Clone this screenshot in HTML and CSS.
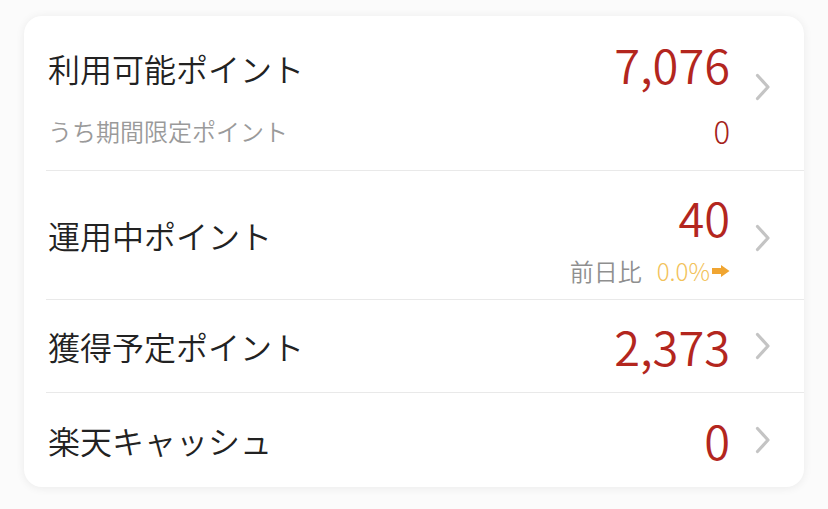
FILE: index.html
```html
<!DOCTYPE html>
<html lang="ja">
<head>
<meta charset="utf-8">
<link rel="stylesheet" href="styles.css">
</head>
<body>
<div class="card">
  <div class="row row-first">
    <div class="grid2">
      <div class="label label-first">利用可能ポイント</div>
      <div class="num">7,076</div>
      <div class="sublabel">うち期間限定ポイント</div>
      <div class="subnum">0</div>
    </div>
    <svg class="chev chev-first" viewBox="0 0 16 28" width="16" height="28"><polyline points="2.5,2.5 13,14 2.5,25.5" fill="none" stroke="#c4c4c4" stroke-width="3.2" stroke-linecap="round" stroke-linejoin="round"/></svg>
  </div>
  <div class="row row-second">
    <div class="label label-second">運用中ポイント</div>
    <div class="right">
      <div class="num">40</div>
      <div class="compare"><span class="cmp-label">前日比</span><span class="cmp-val">0.0%</span><svg class="arrow" viewBox="0 0 18 12" width="18" height="12"><path d="M0 3 H9 V0 L17.5 6 L9 12 V9 H0 Z" fill="#f0a531"/></svg></div>
    </div>
    <svg class="chev" viewBox="0 0 16 28" width="16" height="28"><polyline points="2.5,2.5 13,14 2.5,25.5" fill="none" stroke="#c4c4c4" stroke-width="3.2" stroke-linecap="round" stroke-linejoin="round"/></svg>
  </div>
  <div class="row row-single">
    <div class="label">獲得予定ポイント</div>
    <div class="num">2,373</div>
    <svg class="chev" viewBox="0 0 16 28" width="16" height="28"><polyline points="2.5,2.5 13,14 2.5,25.5" fill="none" stroke="#c4c4c4" stroke-width="3.2" stroke-linecap="round" stroke-linejoin="round"/></svg>
  </div>
  <div class="row row-single row-last">
    <div class="label">楽天キャッシュ</div>
    <div class="num">0</div>
    <svg class="chev" viewBox="0 0 16 28" width="16" height="28"><polyline points="2.5,2.5 13,14 2.5,25.5" fill="none" stroke="#c4c4c4" stroke-width="3.2" stroke-linecap="round" stroke-linejoin="round"/></svg>
  </div>
</div>
</body>
</html>
```
FILE: styles.css
```css
html, body {
  margin: 0;
  padding: 0;
}
body {
  background: #fbfbfb;
  width: 828px;
  height: 509px;
  overflow: hidden;
  font-family: "Noto Sans CJK JP", "Noto Sans", sans-serif;
  padding: 16px 24px 0 24px;
  box-sizing: border-box;
}
.card {
  background: #ffffff;
  border-radius: 18px;
  box-shadow: 0 1px 10px rgba(0, 0, 0, 0.07);
  width: 780px;
  height: 471px;
  box-sizing: border-box;
  overflow: hidden;
}
.row {
  display: flex;
  align-items: center;
  margin-left: 22px;
  padding-left: 2px;
  padding-right: 33px;
  border-bottom: 1px solid #e9e9e9;
  box-sizing: border-box;
}
.row-last {
  border-bottom: none;
}
.row-first {
  height: 155px;
  padding-top: 22px;
  padding-bottom: 23px;
}
.row-second {
  height: 129px;
  padding-top: 19px;
  padding-bottom: 13px;
}
.row-single {
  height: 93px;
}
.row-last {
  height: 94px;
}
.grid2 {
  flex: 1;
  display: grid;
  grid-template-columns: 1fr auto;
  grid-template-rows: 52px 34px;
  row-gap: 24px;
  align-items: center;
}
.label {
  flex: 1;
  font-size: 32px;
  font-weight: 350;
  color: #222222;
  line-height: 44px;
}
.label-first {
  padding-top: 9px;
}
.label-second {
  padding-bottom: 6px;
}
.num {
  font-size: 47px;
  font-weight: 350;
  line-height: 52px;
  color: #b3261e;
  text-align: right;
  letter-spacing: 0;
}
.sublabel {
  font-size: 24px;
  font-weight: 350;
  color: #9a9a9a;
  line-height: 34px;
}
.subnum {
  font-size: 31px;
  font-weight: 300;
  line-height: 34px;
  color: #a5221c;
  text-align: right;
}
.right {
  display: flex;
  flex-direction: column;
  align-items: flex-end;
  gap: 13px;
}
.compare {
  display: flex;
  align-items: center;
  height: 30px;
  font-size: 24px;
  font-weight: 350;
  line-height: 30px;
}
.cmp-label {
  color: #8f8f8f;
  margin-right: 15px;
}
.cmp-val {
  color: #f2c25a;
  font-weight: 300;
  margin-right: 2px;
}
.arrow {
  display: block;
  margin-top: 1px;
}
.chev {
  display: block;
  flex: none;
  margin-left: 25px;
}
.chev-first {
  margin-bottom: 12px;
}
```
